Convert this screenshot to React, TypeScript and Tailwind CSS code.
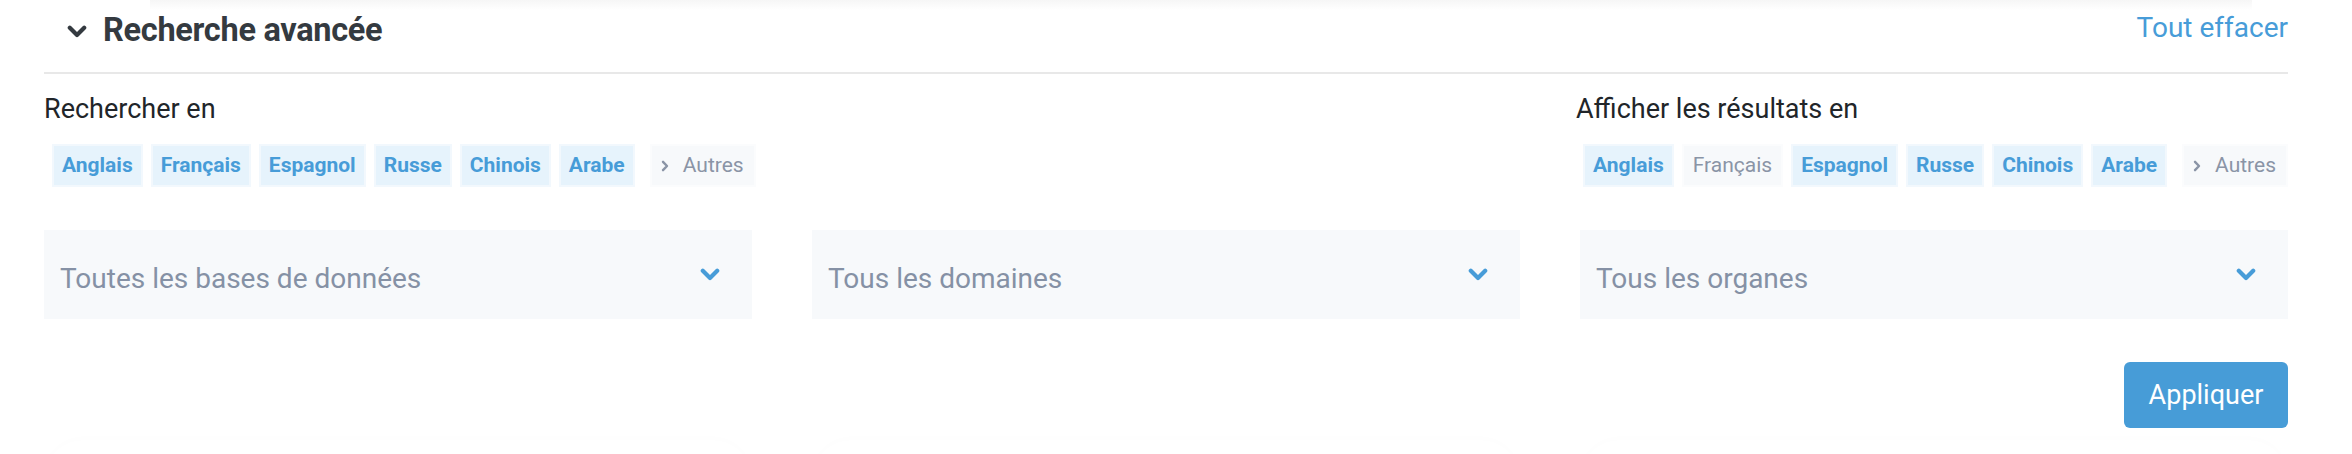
import React from "react";

const languages = ["Anglais", "Français", "Espagnol", "Russe", "Chinois", "Arabe"];

function ChevronDown({ className }: { className: string }) {
  return (
    <svg viewBox="0 0 20 13" className={className} fill="none">
      <polyline
        points="2.8,2.8 10,10 17.2,2.8"
        stroke="currentColor"
        strokeWidth="4.2"
        strokeLinecap="round"
        strokeLinejoin="round"
      />
    </svg>
  );
}

function ChevronRight() {
  return (
    <svg viewBox="0 0 8 12" className="h-[12px] w-[8px] text-[#8a94a6]" fill="none">
      <polyline
        points="2,1.8 6,6 2,10.2"
        stroke="currentColor"
        strokeWidth="2.4"
        strokeLinecap="round"
        strokeLinejoin="round"
      />
    </svg>
  );
}

function LangPills({ inactive = [] as string[], className = "" }) {
  return (
    <div className={`flex gap-[8px] ${className}`}>
      {languages.map((lang) =>
        inactive.includes(lang) ? (
          <span
            key={lang}
            className="flex h-[43px] items-center border-2 border-[#fbfcfd] bg-[#f7f9fb] px-[9px] text-[21px] text-[#8a94a6]"
          >
            {lang}
          </span>
        ) : (
          <span
            key={lang}
            className="flex h-[43px] items-center border-2 border-[#f2f8fd] bg-[#e6f3fc] px-[8px] text-[21px] font-bold text-[#479cd8]"
          >
            {lang}
          </span>
        )
      )}
      <span className="ml-[7px] flex h-[43px] items-center gap-[14px] border-2 border-[#fbfcfd] bg-[#f7f9fb] pl-[9px] pr-[10px] text-[21px] text-[#8a94a6]">
        <ChevronRight />
        Autres
      </span>
    </div>
  );
}

function Select({ label }: { label: string }) {
  return (
    <div className="flex h-[89px] items-center justify-between bg-[#f7f9fb] pl-[16px] pr-[32px]">
      <span className="pt-[8px] text-[28px] text-[#8591a5]">{label}</span>
      <ChevronDown className="h-[13px] w-[20px] text-[#479cd8]" />
    </div>
  );
}

export default function App() {
  return (
    <div className="relative h-[454px] w-full overflow-hidden bg-white font-['Roboto',sans-serif]">
      <div className="absolute left-[150px] right-[100px] top-0 h-[10px] bg-gradient-to-b from-[#f6f6f6] to-white" />

      <div className="relative pl-[44px] pr-[64px]">
        <div className="flex h-[72px] items-start justify-between pt-[11px]">
          <div className="flex items-center gap-[16px] pl-[23px]">
            <ChevronDown className="mt-[2px] h-[13px] w-[20px] text-[#343a40]" />
            <h2 className="text-[32.5px] font-bold leading-[39px] tracking-[-0.3px] text-[#343a40]">
              Recherche avancée
            </h2>
          </div>
          <button className="text-[28px] leading-[33px] text-[#479cd8]">Tout effacer</button>
        </div>
        <div className="h-[2px] bg-[#e8e8e8]" />

        <div className="mt-[19px] flex justify-between">
          <div>
            <p className="text-[27px] leading-[32px] text-[#212529]">Rechercher en</p>
            <LangPills className="ml-[8px] mt-[19px]" />
          </div>
          <div className="w-[712px]">
            <p className="text-[27px] leading-[32px] text-[#212529]">Afficher les résultats en</p>
            <LangPills inactive={["Français"]} className="mt-[19px] justify-end" />
          </div>
        </div>

        <div className="mt-[43px] grid grid-cols-3 gap-[60px]">
          <Select label="Toutes les bases de données" />
          <Select label="Tous les domaines" />
          <Select label="Tous les organes" />
        </div>

        <div className="mt-[43px] flex justify-end">
          <button className="h-[66px] w-[164px] rounded-[6px] bg-[#479cd7] text-[27px] text-white">
            Appliquer
          </button>
        </div>

        <div className="mt-[12px] grid grid-cols-3 gap-[60px]">
          <div className="h-[40px] rounded-t-[40px] bg-white shadow-[0_-2px_8px_rgba(0,0,0,0.012)]" />
          <div className="h-[40px] rounded-t-[40px] bg-white shadow-[0_-2px_8px_rgba(0,0,0,0.012)]" />
          <div className="h-[40px] rounded-t-[40px] bg-white shadow-[0_-2px_8px_rgba(0,0,0,0.012)]" />
        </div>
      </div>
    </div>
  );
}
